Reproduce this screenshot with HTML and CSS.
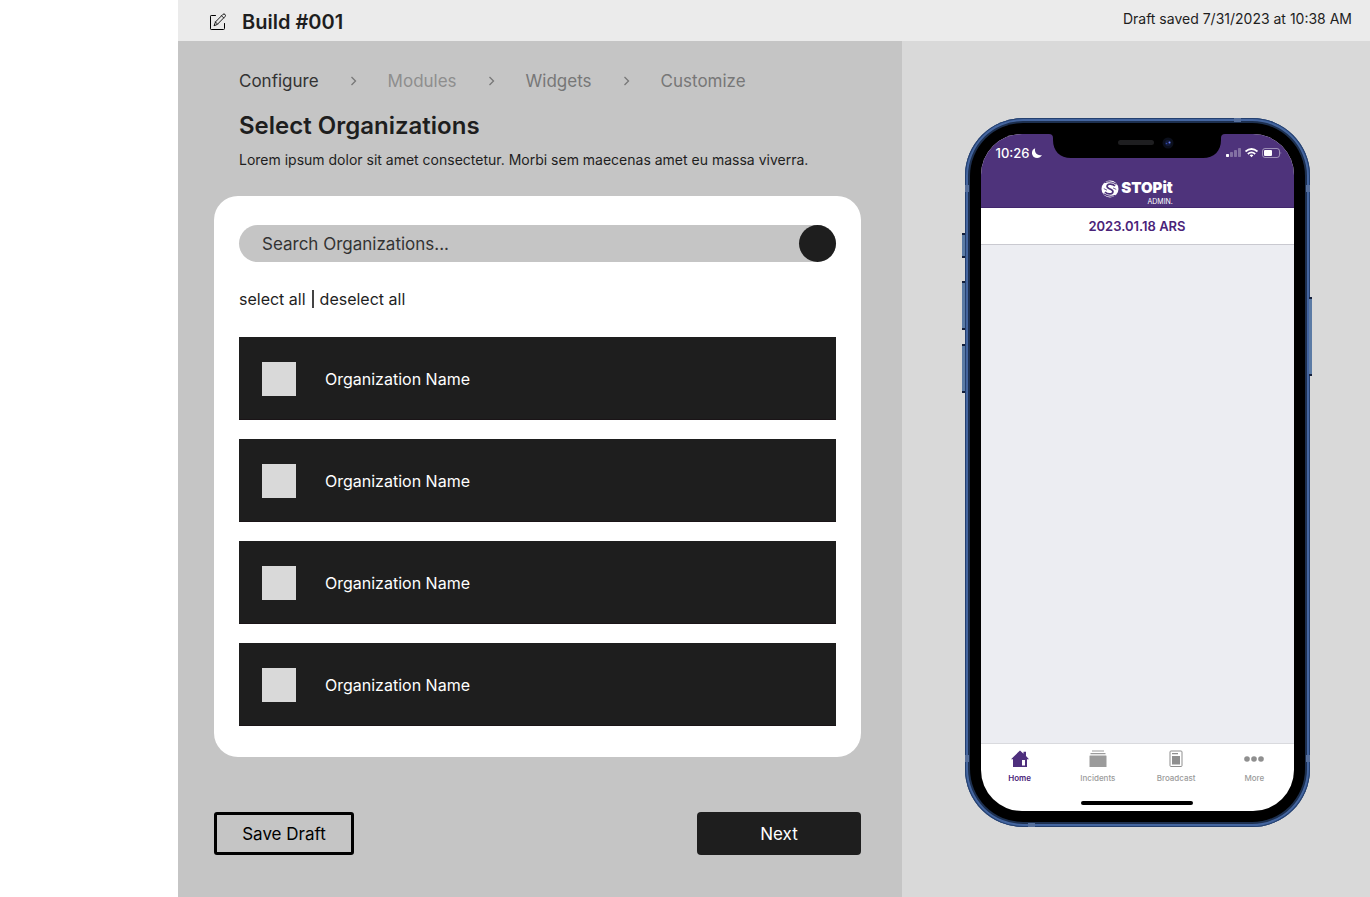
FILE: index.html
```
<!DOCTYPE html>
<html lang="en">
<head>
    <meta charset="UTF-8">
    <meta name="viewport" content="width=device-width, initial-scale=1.0">
    <title>Build #001</title>
    <link rel="stylesheet" href="styles.css">
</head>
<body>
    <div class="app">
        <header class="topbar">
            <svg class="edit-icon" viewBox="0 0 18 18" width="18" height="18" fill="none" stroke="#000" stroke-linejoin="round" stroke-linecap="round">
                <path d="M6.500 2.500H2.200Q1.500 2.500 1.500 3.200V15.800Q1.500 16.500 2.200 16.500H14.500Q15.500 16.500 15.500 15.500V10.500"/>
                <path d="M5.200 12.400L6.500 8.900L14 1.300Q15 .5 16 1.400Q17 2.500 16 3.600L8.500 11.200Z" stroke-width=".9"/>
                <path d="M12.600 2.800L14.700 4.900M6.500 8.900L8.500 11.200" stroke-width=".8"/>
            </svg>
            <h1>Build #001</h1>
            <p class="saved">Draft saved 7/31/2023 at 10:38 AM</p>
        </header>

        <div class="workspace">
            <main class="builder">
                <nav class="steps">
                    <a href="#" class="active">Configure</a>
                    <svg class="chevron" viewBox="0 0 7 10" width="7" height="10"><path d="M1.500 1L5.500 5L1.500 9"/></svg>
                    <a href="#" class="muted">Modules</a>
                    <svg class="chevron" viewBox="0 0 7 10" width="7" height="10"><path d="M1.500 1L5.500 5L1.500 9"/></svg>
                    <a href="#">Widgets</a>
                    <svg class="chevron" viewBox="0 0 7 10" width="7" height="10"><path d="M1.500 1L5.500 5L1.500 9"/></svg>
                    <a href="#">Customize</a>
                </nav>

                <div class="intro">
                    <h2>Select Organizations</h2>
                    <p>Lorem ipsum dolor sit amet consectetur. Morbi sem maecenas amet eu massa viverra.</p>
                </div>

                <section class="card">
                    <form class="search">
                        <input type="text" aria-label="Search Organizations" placeholder="Search Organizations...">
                        <button type="submit" aria-label="Search"></button>
                    </form>

                    <div class="select-links">
                        <button type="button">select all</button>
                        <span class="divider"></span>
                        <button type="button">deselect all</button>
                    </div>

                    <div class="org-list">
                        <label class="org"><input type="checkbox">Organization Name</label>
                        <label class="org"><input type="checkbox">Organization Name</label>
                        <label class="org"><input type="checkbox">Organization Name</label>
                        <label class="org"><input type="checkbox">Organization Name</label>
                    </div>
                </section>

                <div class="actions">
                    <button type="button" class="btn btn-outline">Save Draft</button>
                    <button type="button" class="btn btn-solid">Next</button>
                </div>
            </main>

            <aside class="preview">
                <div class="phone">
                    <span class="side-key mute"></span>
                    <span class="side-key vol-up"></span>
                    <span class="side-key vol-down"></span>
                    <span class="side-key power"></span>
                    <span class="band band-left-top"></span>
                    <span class="band band-left-bottom"></span>
                    <span class="band band-right-top"></span>
                    <span class="band band-right-bottom"></span>
                    <span class="band band-top"></span>
                    <span class="band band-bottom"></span>

                    <div class="bezel">
                        <div class="screen">
                            <svg class="notch" viewBox="0 0 176 25" width="176" height="25">
                                <path d="M0 0H176Q172 0 172 4V6C172 17 165 24 154 24H22C11 24 4 17 4 6V4Q4 0 0 0Z" fill="#000"/>
                                <rect x="69" y="6" width="36" height="5" rx="2.500" fill="#1e1e20"/>
                                <circle cx="119" cy="9" r="5.500" fill="#0b0f1c"/>
                                <circle cx="119" cy="9" r="3" fill="#121a3a"/>
                                <circle cx="120.500" cy="8.500" r="1" fill="#6a7cf0"/>
                                <circle cx="117.500" cy="9.500" r=".8" fill="#2c45a8"/>
                            </svg>

                            <div class="app-head">
                                <div class="status">
                                    <span class="time">10:26</span>
                                    <svg viewBox="0 0 10 10" width="10" height="10"><path d="M3.200 .2C-.8 1.600 -.9 6.800 1.800 8.900C4.600 10.900 8.600 10 9.900 6.900C5.800 8.200 1.900 5 3.200 .2Z" fill="#fff"/></svg>
                                    <svg class="status-icons" viewBox="0 0 56 10" width="56" height="10" fill="#fff">
                                        <rect x="0" y="6" width="3" height="3" rx=".7"/>
                                        <g opacity=".3">
                                            <rect x="4" y="4" width="3" height="5" rx=".7"/>
                                            <rect x="8" y="2" width="3" height="7" rx=".7"/>
                                            <rect x="12" y="0" width="3" height="9" rx=".7"/>
                                        </g>
                                        <g fill="none" stroke="#fff" stroke-width="1.700">
                                            <path d="M19.500 3.500Q25.500 -1.500 31.500 3.500"/>
                                            <path d="M21.800 6Q25.500 2.800 29.200 6"/>
                                        </g>
                                        <path d="M23.600 7.300Q25.500 5.800 27.400 7.300L25.500 9.300Z"/>
                                        <rect x="36.500" y=".5" width="17" height="9" rx="2.500" fill="none" stroke="#fff" stroke-opacity=".45"/>
                                        <rect x="38" y="2" width="8" height="6" rx="1"/>
                                        <path d="M54.600 3.500Q56 5 54.600 6.500Z" opacity=".5"/>
                                    </svg>
                                </div>
                                <div class="brand">
                                    <svg viewBox="0 0 18 20" width="18" height="20">
                                        <circle cx="9" cy="10" r="8.500" fill="#fff"/>
                                        <g fill="none" stroke="#4e337b">
                                            <path d="M14 7Q11.500 4.300 7.500 5.300Q4.500 7.200 7.500 9.200L10.500 10.700Q13.500 12.700 10.500 14.700Q6.500 15.700 4 13" stroke-width="1.700"/>
                                            <path d="M3.500 3.700Q9.500 1.200 15.500 5.200M2.500 14.800Q8.500 18.800 14.500 16.300" stroke-width="1.100"/>
                                            <path d="M12 8.900L15.200 10.400M2.800 9.600L6 11.200" stroke-width=".8"/>
                                        </g>
                                    </svg>
                                    <div class="brand-text">
                                        <strong>STOPit</strong>
                                        <small>ADMIN.</small>
                                    </div>
                                </div>
                            </div>

                            <div class="app-title">2023.01.18 ARS</div>
                            <div class="app-body"></div>

                            <div class="tabbar">
                                <a href="#" class="current">
                                    <svg viewBox="0 0 18 18" width="18" height="18"><path d="M9 .5L12.500 3.700V1.700H15V6L18 9.200H16V17H2V9.200H0ZM11 10V15.500H14V10Z" fill="#4e2f7d" fill-rule="evenodd"/></svg>
                                    Home
                                </a>
                                <a href="#">
                                    <svg viewBox="0 0 18 18" width="18" height="18" fill="#9b9b9b"><path d="M3 .5H15V1.500H3ZM1.500 3H16.500V4.200H1.500ZM1 5.500H17Q17.500 5.500 17.500 6V17H.5V6Q.5 5.500 1 5.500Z"/></svg>
                                    Incidents
                                </a>
                                <a href="#">
                                    <svg viewBox="0 0 18 18" width="18" height="18" fill="#8f8f8f"><rect x="3" y="1" width="12" height="15.500" rx="1" fill="none" stroke="#8f8f8f"/><path d="M5 3H11V4.200H5ZM5 6H13V14.500H5Z"/></svg>
                                    Broadcast
                                </a>
                                <a href="#">
                                    <svg viewBox="0 0 20 18" width="20" height="18" fill="#8f8f8f"><circle cx="3" cy="9" r="2.800"/><circle cx="10" cy="9" r="2.800"/><circle cx="17" cy="9" r="2.800"/></svg>
                                    More
                                </a>
                            </div>
                            <div class="home-bar"></div>
                        </div>
                    </div>
                </div>
            </aside>
        </div>
    </div>
</body>
</html>
```
FILE: styles.css
```
* {
    box-sizing: border-box;
}
body {
    margin: 0;
    background: #fff;
    color: #1e1e1e;
    font-family: Inter, "Open Sans", sans-serif;
}
h1, h2, p {
    margin: 0;
}
a {
    color: inherit;
    text-decoration: none;
}
button, input {
    font: inherit;
    color: inherit;
}
button {
    cursor: pointer;
}

.app {
    display: flex;
    flex-direction: column;
    min-height: 100vh;
    margin-left: 178px;
}

/* Top bar */
.topbar {
    display: flex;
    align-items: center;
    height: 41px;
    padding: 2px 18px 0 31px;
    background: #ebebeb;
}
.topbar h1 {
    margin-left: 15px;
    font-size: 20px;
    line-height: 24px;
    font-weight: 600;
}
.saved {
    margin-left: auto;
    padding-bottom: 5px;
    font-size: 14px;
    line-height: 20px;
}

.workspace {
    flex: 1;
    display: grid;
    grid-template-columns: 724fr 468fr;
}

/* Builder */
.builder {
    padding: 28px 41px 40px 36px;
    background: #c5c5c5;
}
.steps {
    display: flex;
    align-items: center;
    gap: 31px;
    padding-left: 25px;
    font-size: 17px;
    line-height: 24px;
    color: #777;
}
.steps .active {
    color: #333;
}
.steps .muted {
    color: #8e8e8e;
}
.chevron path {
    fill: none;
    stroke: #777;
    stroke-width: 1.3;
}
.intro {
    padding: 18px 25px 0;
}
.intro h2 {
    font-size: 24px;
    line-height: 30px;
    font-weight: 600;
}
.intro p {
    margin-top: 9px;
    font-size: 14px;
    line-height: 20px;
}

.card {
    margin-top: 26px;
    padding: 29px 25px 31px;
    background: #fff;
    border-radius: 24px;
}
.search {
    display: flex;
    height: 37px;
    background: #c5c5c5;
    border-radius: 19px;
}
.search input {
    flex: 1;
    min-width: 0;
    padding: 0 23px;
    border: 0;
    background: none;
    font-size: 17px;
}
.search input::placeholder {
    color: #333;
    opacity: 1;
}
.search button {
    width: 37px;
    border: 0;
    border-radius: 50%;
    background: #1e1e1e;
}
.select-links {
    display: flex;
    align-items: center;
    gap: 6px;
    height: 20px;
    margin: 27px 0 28px;
    font-size: 16px;
    line-height: 20px;
}
.select-links button {
    padding: 0;
    border: 0;
    background: none;
}
.divider {
    width: 2px;
    height: 18px;
    background: #444;
}

.org-list {
    display: grid;
    gap: 19px;
}
.org {
    display: flex;
    align-items: center;
    gap: 29px;
    height: 83px;
    padding: 1px 23px 0;
    background: #1e1e1e;
    box-shadow: inset 0 -1px #1a1417;
    color: #fff;
    font-size: 16px;
    line-height: 20px;
}
.org input {
    appearance: none;
    width: 34px;
    height: 34px;
    margin: 0;
    background: #d9d9d9;
}
.org input:checked {
    background: #4e337b;
}

.actions {
    display: flex;
    justify-content: space-between;
    margin-top: 55px;
}
.btn {
    height: 43px;
    border-radius: 4px;
    font-size: 17px;
}
.btn-outline {
    width: 140px;
    border: 3px solid #000;
    border-radius: 3px;
    background: none;
    color: #000;
}
.btn-solid {
    width: 164px;
    border: 0;
    background: #1e1e1e;
    color: #fff;
}

/* Phone preview */
.preview {
    display: flex;
    justify-content: center;
    align-items: flex-start;
    padding: 77px 20px 20px 22px;
    background: #d9d9d9;
}
.phone {
    position: relative;
    width: 345px;
    padding: 5px;
    border-radius: 58px;
    background: #1d3050;
    box-shadow: inset 0 0 0 1px #24406f, inset 0 0 0 3px #44659f;
}
.side-key {
    position: absolute;
    left: -3px;
    width: 3px;
    background: #5b7ba5;
    border-top: 2px solid #14203c;
    border-bottom: 2px solid #14203c;
}
.mute {
    top: 115px;
    height: 25px;
}
.vol-up {
    top: 163px;
    height: 49px;
}
.vol-down {
    top: 226px;
    height: 49px;
}
.power {
    top: 179px;
    left: auto;
    right: -2px;
    height: 79px;
}
.band {
    position: absolute;
    background: #566f9b;
}
.band-left-top, .band-right-top {
    top: 67px;
}
.band-left-bottom, .band-right-bottom {
    bottom: 65px;
}
.band-left-top, .band-left-bottom, .band-right-top, .band-right-bottom {
    width: 4px;
    height: 7px;
}
.band-left-top, .band-left-bottom {
    left: 0;
}
.band-right-top, .band-right-bottom {
    right: 0;
}
.band-top, .band-bottom {
    width: 7px;
    height: 4px;
}
.band-top {
    top: 0;
    right: 69px;
}
.band-bottom {
    bottom: 0;
    left: 63px;
}
.bezel {
    padding: 11px;
    border-radius: 53px;
    background: #000;
}
.screen {
    position: relative;
    display: flex;
    flex-direction: column;
    height: 677px;
    overflow: hidden;
    border-radius: 41px;
    background: #fff;
}
.notch {
    position: absolute;
    top: 0;
    left: 50%;
    margin-left: -88px;
}
.app-head {
    height: 74px;
    background: #4e337b;
    border-bottom: 1px solid #42276d;
    color: #fff;
}
.status {
    display: flex;
    align-items: center;
    gap: 3px;
    height: 38px;
    padding: 0 12px 0 15px;
}
.time {
    font-size: 13px;
    font-weight: 500;
}
.status-icons {
    margin-left: auto;
}
.brand {
    display: flex;
    justify-content: center;
    gap: 2px;
    height: 30px;
    padding-top: 7px;
}
.brand-text {
    display: flex;
    flex-direction: column;
    align-items: flex-end;
}
.brand strong {
    font-size: 15px;
    line-height: 18px;
    font-weight: 900;
}
.brand small {
    font-size: 7px;
    line-height: 9px;
}
.app-title {
    height: 37px;
    border-bottom: 1px solid #c9c9d0;
    color: #4a2379;
    font-size: 13px;
    line-height: 36px;
    font-weight: 600;
    text-align: center;
}
.app-body {
    flex: 1;
    background: #ecedf2;
}
.tabbar {
    display: grid;
    grid-template-columns: repeat(4, 1fr);
    height: 58px;
    padding-top: 6px;
    border-top: 1px solid #d9dade;
    color: #9b9b9b;
    font-size: 8px;
    line-height: 12px;
    font-weight: 500;
}
.tabbar a {
    display: flex;
    flex-direction: column;
    align-items: center;
    gap: 4px;
}
.tabbar .current {
    color: #4a2379;
    font-weight: 600;
}
.home-bar {
    width: 112px;
    height: 4px;
    margin: 0 auto 6px;
    border-radius: 2px;
    background: #000;
}
```
